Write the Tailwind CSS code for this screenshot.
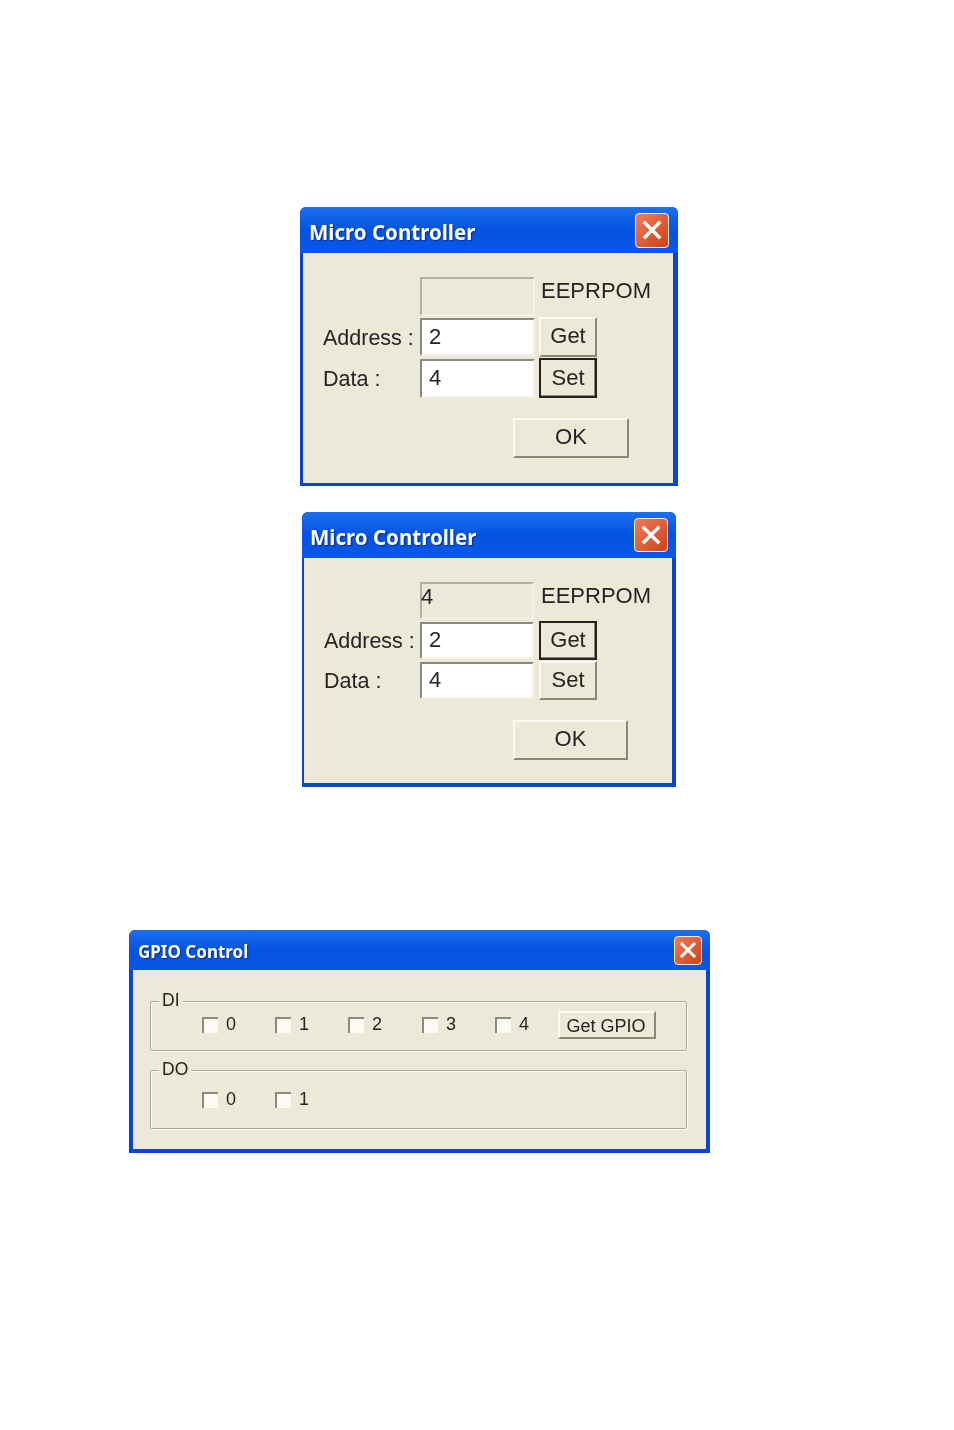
<!DOCTYPE html>
<html lang="en">
<head>
    <meta charset="UTF-8">
    <title>Micro Controller and GPIO dialogs</title>
    <script src="https://cdn.jsdelivr.net/npm/@tailwindcss/browser@4"></script>
</head>
<body class="bg-white w-[954px] h-[1430px] overflow-hidden font-['Liberation_Sans',sans-serif] text-[#242424]">

    <!-- EEPROM dialog, Set focused -->
    <div class="ml-[300px] pt-[207px] w-[378px] blur-[0.4px]">
        <div class="w-[378px] h-[279px] bg-[#0b44d2] rounded-t-[6px] overflow-hidden flex flex-col">
            <div class="h-[46px] shrink-0 flex items-center justify-between pl-[9px] pr-[9px] bg-gradient-to-b from-[#1c70ee] via-[#0452e2] to-[#0a58e6]">
                <span class="font-['Noto_Sans',sans-serif] font-bold text-[20.5px] pt-[4px] text-white [text-shadow:1px_1px_1px_#0a2a90]">Micro Controller</span>
                <div class="w-[34px] h-[35px] rounded-[4px] border border-[#f4efe8] bg-gradient-to-br from-[#ee7a58] to-[#d0400f] flex items-center justify-center">
                    <svg width="22" height="22" viewBox="0 0 22 22"><path d="M4 4 18 18M18 4 4 18" stroke="#fff" stroke-width="3.4" stroke-linecap="square"/></svg>
                </div>
            </div>
            <div class="flex-1 ml-[3px] mr-[5px] mb-[3px] bg-[#ece9d8] pl-[20px] pt-[24px]">
                <div class="flex items-start h-[39px]">
                    <div class="w-[97px]"></div>
                    <div class="w-[115px] h-[39px] border-2 border-t-[#b2b0a0] border-l-[#b2b0a0] border-r-[#f4f2e6] border-b-[#f4f2e6]"></div>
                    <span class="ml-[6px] text-[22px] leading-[28px]">EEPRPOM</span>
                </div>
                <div class="flex items-center h-[40px] mt-[1px]">
                    <span class="w-[97px] pt-[2px] text-[21.5px]">Address :</span>
                    <input value="2" class="w-[115px] h-[38px] pl-[7px] text-[22px] bg-white outline-none border-2 border-t-[#8c8a7a] border-l-[#8c8a7a] border-r-[#f4f2e6] border-b-[#f4f2e6]">
                    <button class="ml-[4px] w-[58px] h-[40px] pb-[3px] text-[22px] bg-[#ece9d8] border-2 border-t-[#fbfaf3] border-l-[#fbfaf3] border-r-[#8a8875] border-b-[#8a8875]">Get</button>
                </div>
                <div class="flex items-center h-[40px] mt-[1px]">
                    <span class="w-[97px] pt-[2px] text-[21.5px]">Data :</span>
                    <input value="4" class="w-[115px] h-[39px] pl-[7px] pb-[1px] text-[22px] bg-white outline-none border-2 border-t-[#8c8a7a] border-l-[#8c8a7a] border-r-[#f4f2e6] border-b-[#f4f2e6]">
                    <button class="ml-[4px] w-[58px] h-[40px] pb-[2px] text-[22px] bg-[#ece9d8] border-2 border-[#222] shadow-[inset_-1px_-1px_0_#8a8875]">Set</button>
                </div>
                <button class="block ml-[190px] mt-[20px] w-[116px] h-[40px] pb-[3px] text-[22px] bg-[#ece9d8] border-2 border-t-[#fbfaf3] border-l-[#fbfaf3] border-r-[#8a8875] border-b-[#8a8875]">OK</button>
            </div>
        </div>
    </div>

    <!-- EEPROM dialog, Get focused -->
    <div class="ml-[302px] mt-[26px] w-[374px] blur-[0.4px]">
        <div class="w-[374px] h-[275px] bg-[#0b44d2] rounded-t-[6px] overflow-hidden flex flex-col">
            <div class="h-[46px] shrink-0 flex items-center justify-between pl-[8px] pr-[8px] bg-gradient-to-b from-[#1c70ee] via-[#0452e2] to-[#0a58e6]">
                <span class="font-['Noto_Sans',sans-serif] font-bold text-[20.5px] pt-[4px] text-white [text-shadow:1px_1px_1px_#0a2a90]">Micro Controller</span>
                <div class="w-[34px] h-[34px] rounded-[4px] border border-[#f4efe8] bg-gradient-to-br from-[#ee7a58] to-[#d0400f] flex items-center justify-center">
                    <svg width="22" height="22" viewBox="0 0 22 22"><path d="M4 4 18 18M18 4 4 18" stroke="#fff" stroke-width="3.4" stroke-linecap="square"/></svg>
                </div>
            </div>
            <div class="flex-1 ml-[2px] mr-[4px] mb-[4px] bg-[#ece9d8] pl-[20px] pt-[24px]">
                <div class="flex items-start h-[37px]">
                    <div class="w-[96px]"></div>
                    <div class="w-[114px] h-[37px] -indent-px border-2 border-t-[#b2b0a0] border-l-[#b2b0a0] border-r-[#f4f2e6] border-b-[#f4f2e6] text-[22px] leading-[26px]">4</div>
                    <span class="ml-[7px] text-[22px] leading-[28px]">EEPRPOM</span>
                </div>
                <div class="flex items-center h-[39px] mt-[2px]">
                    <span class="w-[96px] pt-[2px] text-[21.5px]">Address :</span>
                    <input value="2" class="w-[114px] h-[37px] pl-[7px] pb-[1px] text-[22px] bg-white outline-none border-2 border-t-[#8c8a7a] border-l-[#8c8a7a] border-r-[#f4f2e6] border-b-[#f4f2e6]">
                    <button class="ml-[5px] w-[58px] h-[39px] pb-[2px] text-[22px] bg-[#ece9d8] border-2 border-[#222] shadow-[inset_-1px_-1px_0_#8a8875]">Get</button>
                </div>
                <div class="flex items-center h-[39px] mt-[1px]">
                    <span class="w-[96px] pt-[2px] text-[21.5px]">Data :</span>
                    <input value="4" class="w-[114px] h-[37px] pl-[7px] pb-[1px] text-[22px] bg-white outline-none border-2 border-t-[#8c8a7a] border-l-[#8c8a7a] border-r-[#f4f2e6] border-b-[#f4f2e6]">
                    <button class="ml-[5px] w-[58px] h-[39px] pb-[3px] text-[22px] bg-[#ece9d8] border-2 border-t-[#fbfaf3] border-l-[#fbfaf3] border-r-[#8a8875] border-b-[#8a8875]">Set</button>
                </div>
                <button class="block ml-[189px] mt-[20px] w-[115px] h-[40px] pb-[4px] text-[22px] bg-[#ece9d8] border-2 border-t-[#fbfaf3] border-l-[#fbfaf3] border-r-[#8a8875] border-b-[#8a8875]">OK</button>
            </div>
        </div>
    </div>

    <!-- GPIO dialog -->
    <div class="ml-[129px] mt-[143px] w-[581px] blur-[0.4px]">
        <div class="w-[581px] h-[223px] bg-[#0b44d2] rounded-t-[6px] overflow-hidden flex flex-col">
            <div class="h-[40px] shrink-0 flex items-center justify-between pl-[9px] pr-[8px] bg-gradient-to-b from-[#1c70ee] via-[#0452e2] to-[#0a58e6]">
                <span class="font-['Noto_Sans',sans-serif] font-bold text-[17px] pt-[3px] text-white [text-shadow:1px_1px_1px_#0a2a90]">GPIO Control</span>
                <div class="w-[28px] h-[29px] rounded-[4px] border border-[#f4efe8] bg-gradient-to-br from-[#ee7a58] to-[#d0400f] flex items-center justify-center">
                    <svg width="18" height="18" viewBox="0 0 18 18"><path d="M3 3 15 15M15 3 3 15" stroke="#fff" stroke-width="3" stroke-linecap="square"/></svg>
                </div>
            </div>
            <div class="flex-1 mx-[4px] mb-[4px] bg-[#ece9d8] pl-[17px] pt-[31px]">
                <div class="relative w-[537px] h-[50px] border border-[#aca899] rounded-[2px] shadow-[inset_1px_1px_0_#fbfaf3,1px_1px_0_#fbfaf3] pl-[51px] pt-[9px]">
                    <span class="absolute left-[8px] -top-[12px] px-[3px] bg-[#ece9d8] text-[17.5px] leading-[21px]">DI</span>
                    <div class="flex items-center h-[28px]">
                        <label class="w-[73px] flex items-center text-[18px] leading-[22px]"><input type="checkbox" class="appearance-none w-[16px] h-[16px] mr-[8px] bg-[#fbfaf3] border-t-2 border-l-2 border-[#8c8a7a]"><span class="-mt-[2px]">0</span></label>
                        <label class="w-[73px] flex items-center text-[18px] leading-[22px]"><input type="checkbox" class="appearance-none w-[16px] h-[16px] mr-[8px] bg-[#fbfaf3] border-t-2 border-l-2 border-[#8c8a7a]"><span class="-mt-[2px]">1</span></label>
                        <label class="w-[74px] flex items-center text-[18px] leading-[22px]"><input type="checkbox" class="appearance-none w-[16px] h-[16px] mr-[8px] bg-[#fbfaf3] border-t-2 border-l-2 border-[#8c8a7a]"><span class="-mt-[2px]">2</span></label>
                        <label class="w-[73px] flex items-center text-[18px] leading-[22px]"><input type="checkbox" class="appearance-none w-[16px] h-[16px] mr-[8px] bg-[#fbfaf3] border-t-2 border-l-2 border-[#8c8a7a]"><span class="-mt-[2px]">3</span></label>
                        <label class="w-[63px] flex items-center text-[18px] leading-[22px]"><input type="checkbox" class="appearance-none w-[16px] h-[16px] mr-[8px] bg-[#fbfaf3] border-t-2 border-l-2 border-[#8c8a7a]"><span class="-mt-[2px]">4</span></label>
                        <button class="w-[98px] h-[28px] pb-[4px] pr-[2px] text-[18px] bg-[#ece9d8] border-2 border-t-[#fbfaf3] border-l-[#fbfaf3] border-r-[#8a8875] border-b-[#8a8875]">Get GPIO</button>
                    </div>
                </div>
                <div class="relative w-[537px] h-[59px] mt-[19px] border border-[#aca899] rounded-[2px] shadow-[inset_1px_1px_0_#fbfaf3,1px_1px_0_#fbfaf3] pl-[51px] pt-[21px]">
                    <span class="absolute left-[8px] -top-[12px] px-[3px] bg-[#ece9d8] text-[17.5px] leading-[21px]">DO</span>
                    <div class="flex items-center h-[16px]">
                        <label class="w-[73px] flex items-center text-[18px] leading-[22px]"><input type="checkbox" class="appearance-none w-[16px] h-[16px] mr-[8px] bg-[#fbfaf3] border-t-2 border-l-2 border-[#8c8a7a]"><span class="-mt-[2px]">0</span></label>
                        <label class="w-[73px] flex items-center text-[18px] leading-[22px]"><input type="checkbox" class="appearance-none w-[16px] h-[16px] mr-[8px] bg-[#fbfaf3] border-t-2 border-l-2 border-[#8c8a7a]"><span class="-mt-[2px]">1</span></label>
                    </div>
                </div>
            </div>
        </div>
    </div>

</body>
</html>
